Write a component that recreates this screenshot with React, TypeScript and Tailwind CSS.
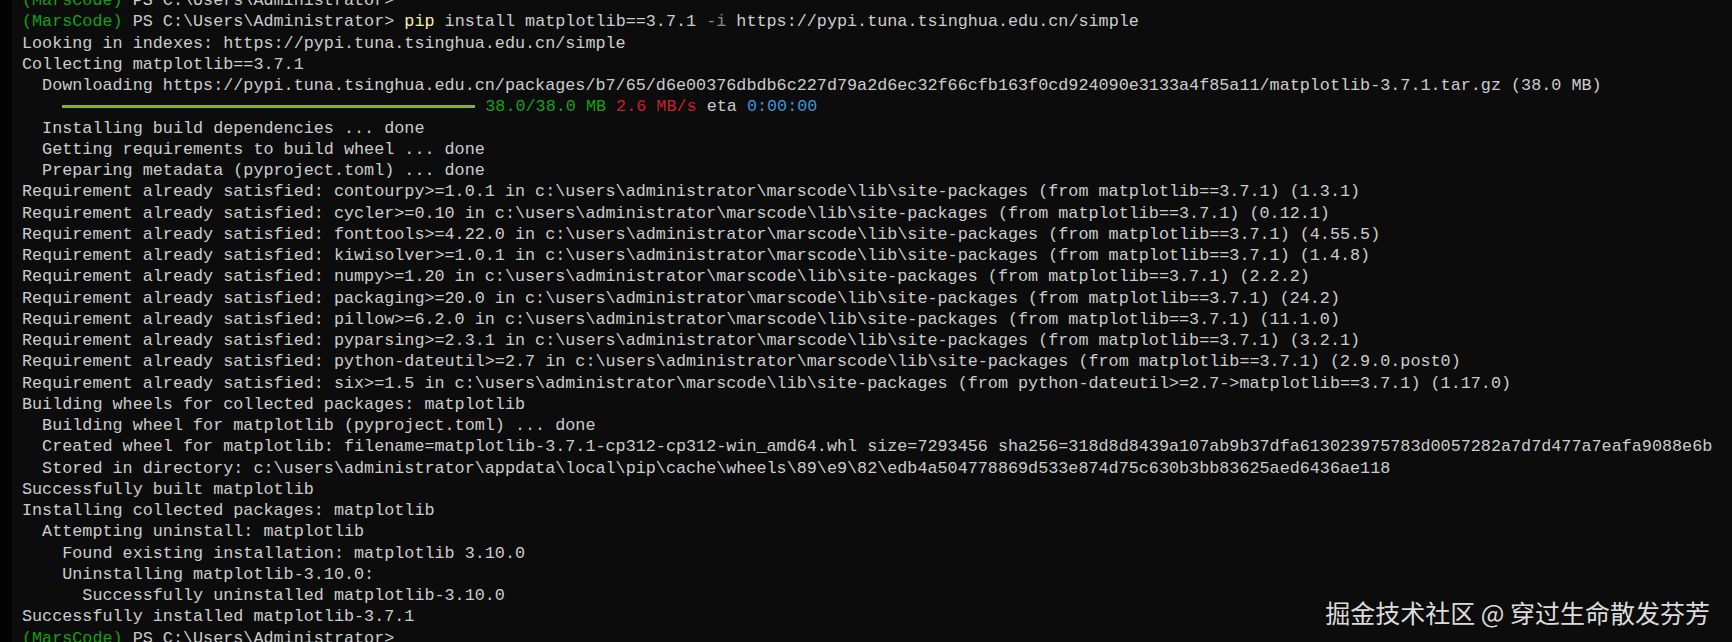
import React from "react";

const P = "c:\\users\\administrator\\marscode\\lib\\site-packages";

const reqs: [string, string, string][] = [
  ["contourpy>=1.0.1", "matplotlib==3.7.1", "1.3.1"],
  ["cycler>=0.10", "matplotlib==3.7.1", "0.12.1"],
  ["fonttools>=4.22.0", "matplotlib==3.7.1", "4.55.5"],
  ["kiwisolver>=1.0.1", "matplotlib==3.7.1", "1.4.8"],
  ["numpy>=1.20", "matplotlib==3.7.1", "2.2.2"],
  ["packaging>=20.0", "matplotlib==3.7.1", "24.2"],
  ["pillow>=6.2.0", "matplotlib==3.7.1", "11.1.0"],
  ["pyparsing>=2.3.1", "matplotlib==3.7.1", "3.2.1"],
  ["python-dateutil>=2.7", "matplotlib==3.7.1", "2.9.0.post0"],
  ["six>=1.5", "python-dateutil>=2.7->matplotlib==3.7.1", "1.17.0"],
];

function Prompt({ children }: { children?: React.ReactNode }) {
  return (
    <div>
      <span className="text-[#13a10e]">(MarsCode)</span> PS C:\Users\Administrator&gt;{children}
    </div>
  );
}

export default function App() {
  return (
    <div className="flex h-[642px] w-[1732px] overflow-hidden bg-[#0c0c0c]">
      <div className="w-[12px] shrink-0 bg-[#030303]" />
      <div className="relative flex-1 overflow-hidden pl-[10px]">
        <div className="mt-[-10px] whitespace-pre font-['Liberation_Mono',monospace] text-[16.77px] leading-[21.25px] text-[#cccccc]">
          <Prompt />
          <Prompt>
            {" "}
            <span className="text-[#f9f1a5]">pip</span> install matplotlib==3.7.1 <span className="text-[#8a8a8a]">-i</span> https://pypi.tuna.tsinghua.edu.cn/simple
          </Prompt>
          <div>Looking in indexes: https://pypi.tuna.tsinghua.edu.cn/simple</div>
          <div>Collecting matplotlib==3.7.1</div>
          <div>
            {"  Downloading https://pypi.tuna.tsinghua.edu.cn/packages/b7/65/d6e00376dbdb6c227d79a2d6ec32f66cfb163f0cd924090e3133a4f85a11/matplotlib-3.7.1.tar.gz (38.0 MB)"}
          </div>
          <div>
            {"    "}
            <span className="inline-block h-[3px] w-[413px] bg-[#86ab37] align-middle" />{" "}
            <span className="text-[#16a016]">38.0/38.0 MB</span>{" "}
            <span className="text-[#c8202a]">2.6 MB/s</span> eta{" "}
            <span className="text-[#3a96dd]">0:00:00</span>
          </div>
          <div>{"  Installing build dependencies ... done"}</div>
          <div>{"  Getting requirements to build wheel ... done"}</div>
          <div>{"  Preparing metadata (pyproject.toml) ... done"}</div>
          {reqs.map(([r, f, v]) => (
            <div key={r}>{`Requirement already satisfied: ${r} in ${P} (from ${f}) (${v})`}</div>
          ))}
          <div>Building wheels for collected packages: matplotlib</div>
          <div>{"  Building wheel for matplotlib (pyproject.toml) ... done"}</div>
          <div>
            {"  Created wheel for matplotlib: filename=matplotlib-3.7.1-cp312-cp312-win_amd64.whl size=7293456 sha256=318d8d8439a107ab9b37dfa613023975783d0057282a7d7d477a7eafa9088e6b"}
          </div>
          <div>
            {"  Stored in directory: c:\\users\\administrator\\appdata\\local\\pip\\cache\\wheels\\89\\e9\\82\\edb4a504778869d533e874d75c630b3bb83625aed6436ae118"}
          </div>
          <div>Successfully built matplotlib</div>
          <div>Installing collected packages: matplotlib</div>
          <div>{"  Attempting uninstall: matplotlib"}</div>
          <div>{"    Found existing installation: matplotlib 3.10.0"}</div>
          <div>{"    Uninstalling matplotlib-3.10.0:"}</div>
          <div>{"      Successfully uninstalled matplotlib-3.10.0"}</div>
          <div>Successfully installed matplotlib-3.7.1</div>
          <Prompt />
        </div>
        <div className="absolute right-[22px] top-[597px] whitespace-pre font-['Noto_Sans_CJK_SC','Noto_Sans',sans-serif] text-[25px] leading-[30px] text-[#dcdcdc]">
          掘金技术社区 @ 穿过生命散发芬芳
        </div>
      </div>
    </div>
  );
}
